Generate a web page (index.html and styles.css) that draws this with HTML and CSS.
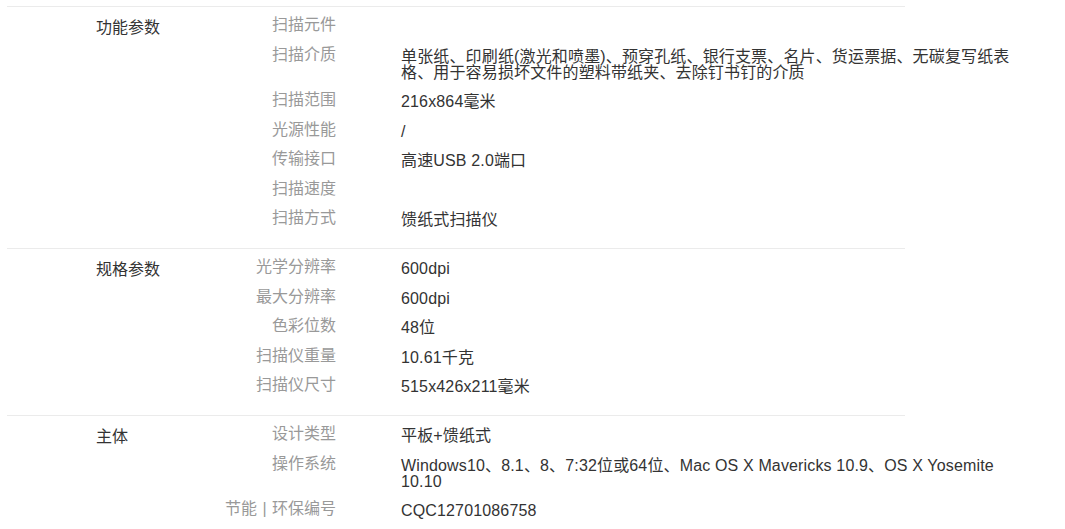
FILE: index.html
```html
<!DOCTYPE html>
<html lang="zh-CN">
<head>
<meta charset="utf-8">
<title>参数</title>
<link rel="stylesheet" href="styles.css">
</head>
<body>
<div class="specs">
  <section class="group">
    <div class="group-title">功能参数</div>
    <div class="rows">
      <div class="row"><div class="label">扫描元件</div><div class="value"></div></div>
      <div class="row"><div class="label">扫描介质</div><div class="value">单张纸、印刷纸(激光和喷墨)、预穿孔纸、银行支票、名片、货运票据、无碳复写纸表格、用于容易损坏文件的塑料带纸夹、去除钉书钉的介质</div></div>
      <div class="row"><div class="label">扫描范围</div><div class="value">216x864毫米</div></div>
      <div class="row"><div class="label">光源性能</div><div class="value">/</div></div>
      <div class="row"><div class="label">传输接口</div><div class="value">高速USB 2.0端口</div></div>
      <div class="row"><div class="label">扫描速度</div><div class="value"></div></div>
      <div class="row"><div class="label">扫描方式</div><div class="value">馈纸式扫描仪</div></div>
    </div>
  </section>
  <section class="group">
    <div class="group-title">规格参数</div>
    <div class="rows">
      <div class="row"><div class="label">光学分辨率</div><div class="value">600dpi</div></div>
      <div class="row"><div class="label">最大分辨率</div><div class="value">600dpi</div></div>
      <div class="row"><div class="label">色彩位数</div><div class="value">48位</div></div>
      <div class="row"><div class="label">扫描仪重量</div><div class="value">10.61千克</div></div>
      <div class="row"><div class="label">扫描仪尺寸</div><div class="value">515x426x211毫米</div></div>
    </div>
  </section>
  <section class="group">
    <div class="group-title">主体</div>
    <div class="rows">
      <div class="row"><div class="label">设计类型</div><div class="value">平板+馈纸式</div></div>
      <div class="row"><div class="label">操作系统</div><div class="value">Windows10、8.1、8、7:32位或64位、Mac OS X Mavericks 10.9、OS X Yosemite 10.10</div></div>
      <div class="row"><div class="label">节能 <span class="sep">|</span> 环保编号</div><div class="value">CQC12701086758</div></div>
    </div>
  </section>
</div>
</body>
</html>
```

FILE: styles.css
```css
html, body {
  margin: 0;
  padding: 0;
  background: #fff;
}

body {
  font-family: "Liberation Sans", "Noto Sans CJK SC", sans-serif;
  font-size: 16px;
  line-height: 16px;
  color: #333;
}

.specs {
  padding: 6px 0 0 7px;
  width: 898px;
}

.group {
  display: flex;
  border-top: 1px solid #ebebeb;
  padding: 10px 0 20px;
}

.group-title {
  flex: none;
  width: 89px;
  padding: 3px 0 0 89px;
  color: #333;
}

.rows {
  display: flex;
  flex-direction: column;
  gap: 11.5px;
}

.row {
  display: flex;
  align-items: flex-start;
}

.label {
  flex: none;
  width: 151px;
  text-align: right;
  color: #999;
}

.sep {
  margin: 0 1px;
}

.value {
  flex: none;
  width: 616px;
  margin-left: 65px;
  padding-top: 2px;
  min-height: 16px;
  color: #333;
  letter-spacing: 0.15px;
}
```
